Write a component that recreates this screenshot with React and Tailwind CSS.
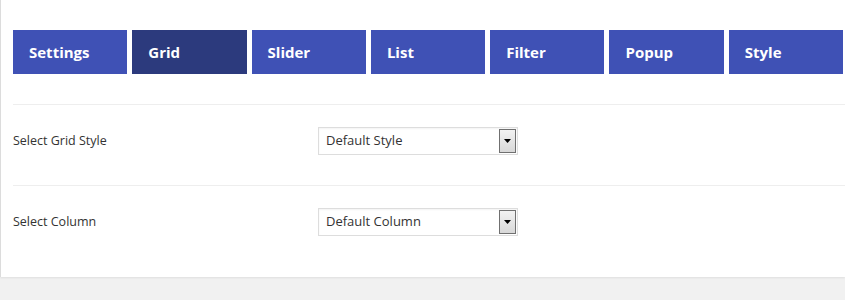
import React from 'react';

const tabs = ['Settings', 'Grid', 'Slider', 'List', 'Filter', 'Popup', 'Style'];

const FakeSelect = ({ value }) => (
  <div className="w-[200px] h-[28px] border border-[#dddddd] bg-white flex items-center justify-between pl-[7px] pr-[1px] shadow-[inset_0_1px_2px_rgba(0,0,0,0.05)]">
    <span className="text-[13px] text-[#333]">{value}</span>
    <div className="w-[17px] h-[24px] border border-[#707070] bg-gradient-to-b from-[#f2f2f2] to-[#d8d8d8] flex items-center justify-center">
      <svg width="7" height="4" viewBox="0 0 7 4">
        <path d="M0 0 L7 0 L3.5 4 Z" fill="#000" />
      </svg>
    </div>
  </div>
);

const Row = ({ label, value }) => (
  <div className="flex items-center pt-[22px] pb-[30px] border-b border-[#eeeeee] last:border-b-0">
    <div className="w-[305px] text-[12.5px] text-[#333]">{label}</div>
    <FakeSelect value={value} />
  </div>
);

export default function App() {
  return (
    <div className="w-[845px] h-[300px] bg-[#f1f1f1] overflow-hidden" style={{ fontFamily: '"Open Sans", "Noto Sans", sans-serif' }}>
      <div className="bg-white border-l border-[#dcdcdc] h-[277px] pl-[12px] pt-[30px] shadow-[0_1px_2px_rgba(0,0,0,0.08)]">
        <div className="flex gap-[5px] whitespace-nowrap">
          {tabs.map((t) => (
            <div
              key={t}
              className={`shrink-0 w-[114.3px] h-[44px] flex items-center pl-[16px] pt-[1px] text-white font-bold text-[15px] ${
                t === 'Grid' ? 'bg-[#2c3a7d]' : 'bg-[#3f51b5]'
              }`}
            >
              {t}
            </div>
          ))}
        </div>
        <div className="mt-[30px] border-t border-[#eeeeee]">
          <Row label="Select Grid Style" value="Default Style" />
          <Row label="Select Column" value="Default Column" />
        </div>
      </div>
    </div>
  );
}
